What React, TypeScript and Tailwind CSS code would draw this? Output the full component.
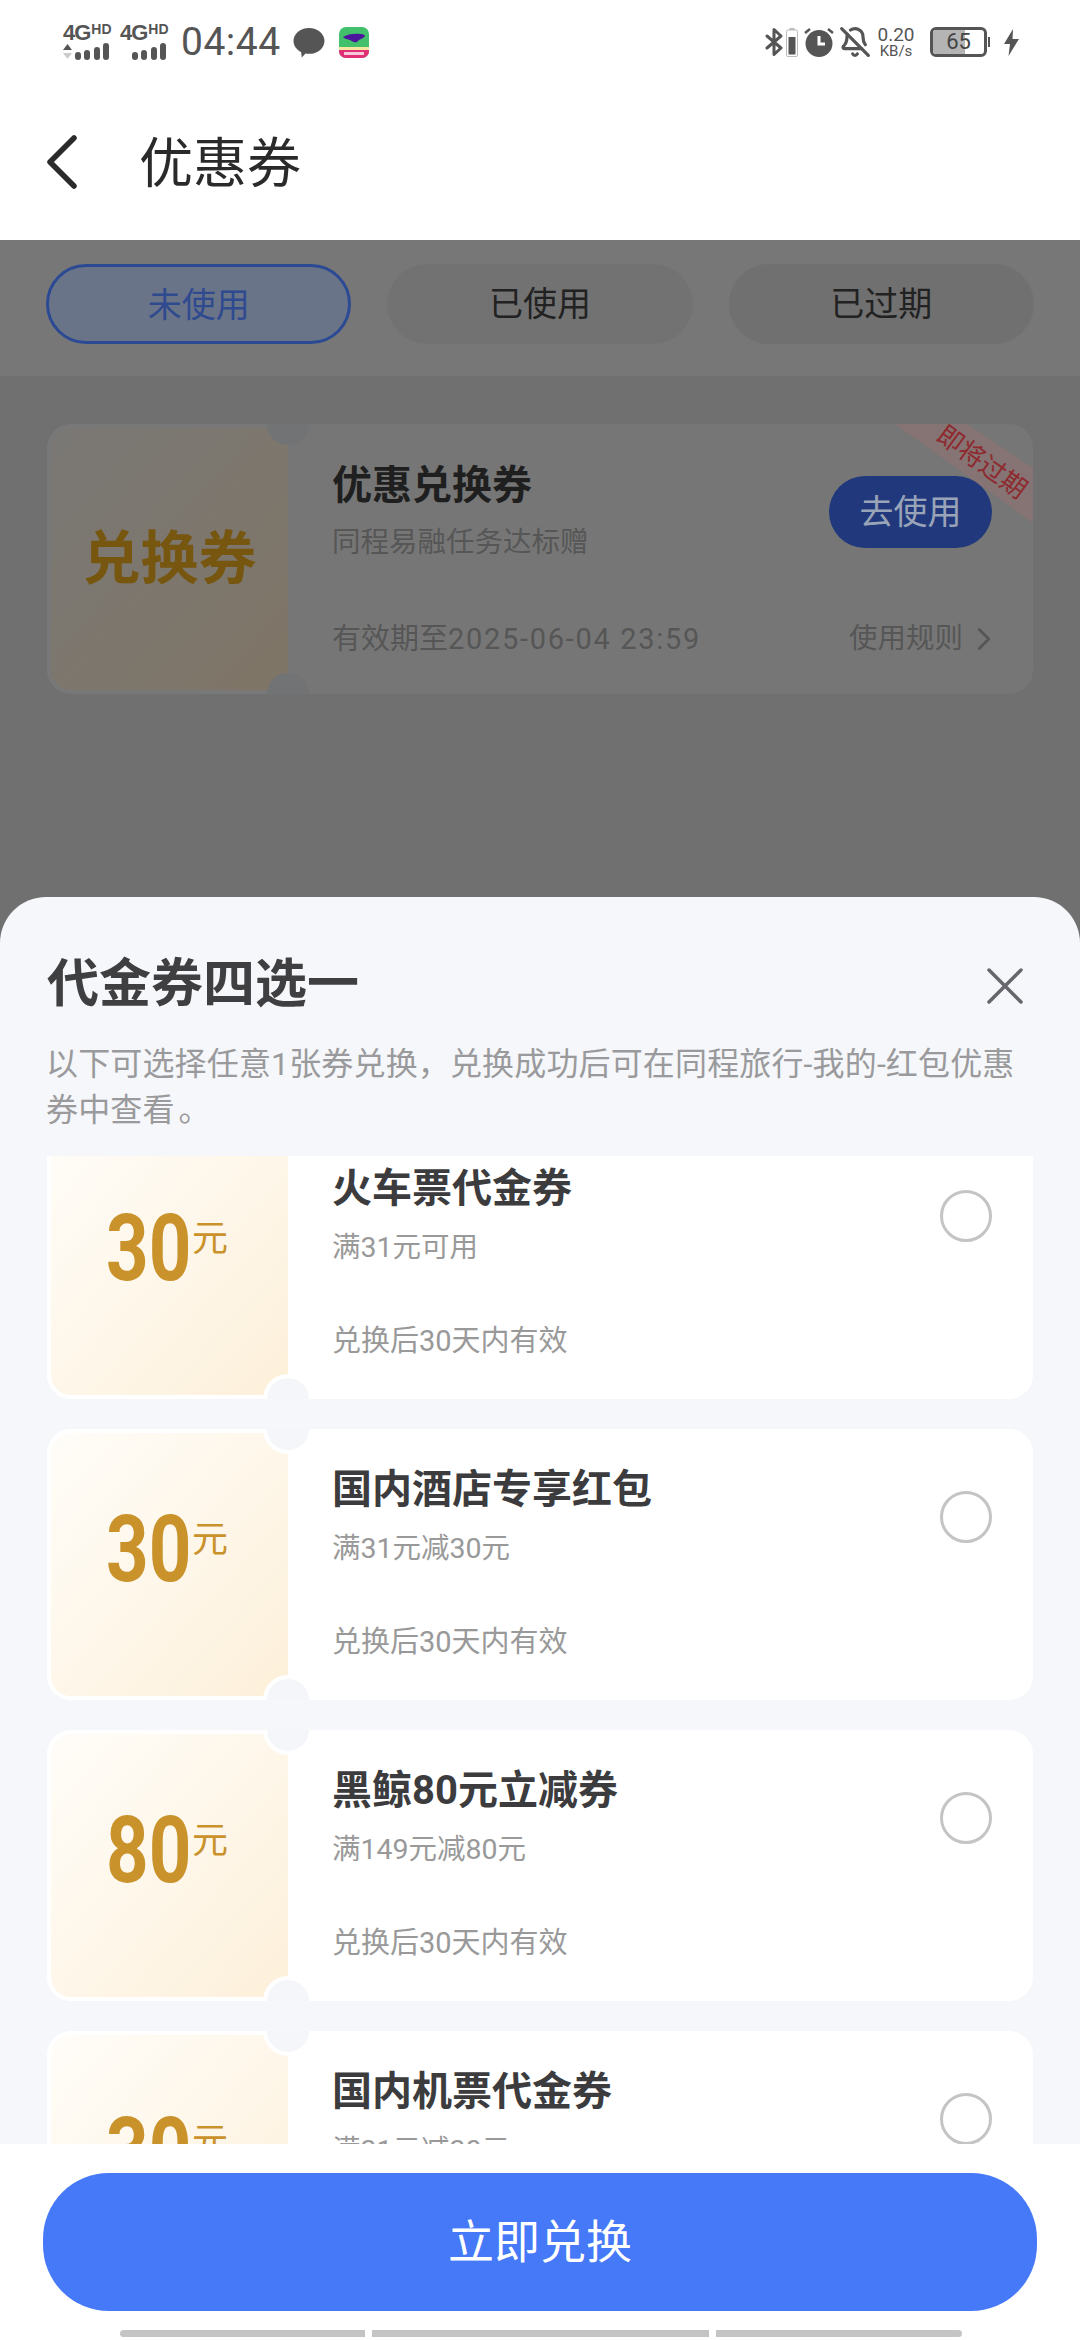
import React from 'react';
import { BellOff, ChevronRight } from 'lucide-react';

const vouchers = [
  { amount: '30', title: '火车票代金券', rule: '满31元可用' },
  { amount: '30', title: '国内酒店专享红包', rule: '满31元减30元' },
  { amount: '80', title: '黑鲸80元立减券', rule: '满149元减80元' },
  { amount: '30', title: '国内机票代金券', rule: '满31元减30元' },
];

function Signal({ arrow }: { arrow?: boolean }) {
  return (
    <div className="flex flex-col w-[47px] gap-[1px]">
      <div className="flex items-start h-[19px] leading-none font-['Liberation_Sans',sans-serif] font-bold text-[#555]">
        <span className="text-[22px] leading-[19px] tracking-[-1px]">4G</span>
        <span className="ml-[1px] text-[14px] leading-[12px]">HD</span>
      </div>
      <svg width="47" height="18" viewBox="0 0 47 18" fill="#555">
        {arrow && <path d="M0 7l4.500-6L9 7z" />}
        {arrow && <path d="M0 10l4.500 6L9 10z" fill="#ccc" />}
        <rect x="12" y="9" width="6" height="8" rx="3" />
        <rect x="21" y="7" width="6" height="10" rx="3" />
        <rect x="31" y="4" width="6" height="13" rx="3" />
        <rect x="40" y="0" width="6" height="17" rx="3" />
      </svg>
    </div>
  );
}

function StatusBar() {
  return (
    <div className="flex items-center justify-between h-[84px] pl-[63px] pr-[61px] text-[#555]">
      <div className="flex items-center">
        <Signal arrow />
        <div className="ml-[10px]"><Signal /></div>
        <span className="ml-[14px] text-[39px] leading-none tracking-[0.5px]">04:44</span>
        <svg className="ml-[12px]" width="32" height="31" viewBox="0 0 30 30" fill="#555">
          <path d="M15 1c8.300 0 15 5.600 15 12.500S23.300 26 15 26c-1.200 0-2.300-.1-3.400-.3L8 29.500l-.6-5.200C3 22 0 18 0 13.500 0 6.600 6.700 1 15 1z" />
        </svg>
        <svg className="ml-[14px]" width="30" height="31" viewBox="0 0 30 31">
          <rect width="30" height="31" rx="7" fill="#43c06c" />
          <path d="M0 20h30v4H0z" fill="#f5e7a0" />
          <path d="M0 23h30v1a7 7 0 0 1-7 7H7a7 7 0 0 1-7-7z" fill="#e22f75" />
          <path d="M4 10c4-3 12-4 18-3 2 0 4 1 4 2-2 3-6 3-8 6-3 1-5-1-7-2-2-1-5-1-7-3z" fill="#4b169c" />
          <rect x="5" y="25" width="20" height="3" fill="#f8c9d9" />
        </svg>
      </div>
      <div className="flex items-center">
        <svg width="18" height="28" viewBox="0 0 18 28" fill="none" stroke="#555" strokeWidth="3" strokeLinecap="round" strokeLinejoin="round">
          <path d="M2 8l14 12-7 6.500V1.500L16 8 2 20" />
        </svg>
        <svg className="ml-[3px]" width="12" height="29" viewBox="0 0 12 29">
          <rect x="3.500" y="0" width="5" height="2" fill="#bbb" />
          <rect x="0.500" y="2" width="11" height="26.500" rx="1.500" fill="none" stroke="#bbb" />
          <rect x="2.500" y="9" width="7" height="17.500" fill="#555" />
        </svg>
        <svg className="ml-[6px]" width="30" height="30" viewBox="0 0 30 30">
          <circle cx="15" cy="16.500" r="13.500" fill="#555" />
          <path d="M15 9v8h6" fill="none" stroke="#fff" strokeWidth="3" />
          <path d="M1 6l5-4M29 6l-5-4" stroke="#555" strokeWidth="2.500" />
        </svg>
        <BellOff size={32} strokeWidth={2.400} className="ml-[5px]" />
        <div className="ml-[6px] flex flex-col items-center w-[38px] leading-none">
          <span className="text-[19px] leading-[18px]">0.20</span>
          <span className="text-[15px] leading-[15px]">KB/s</span>
        </div>
        <div className="ml-[15px] flex items-center">
          <div className="relative w-[57px] h-[30px] rounded-[6px] border-[3px] border-[#555] overflow-hidden">
            <div className="h-full w-[32px] bg-[#b4b4b4]" />
            <span className="absolute inset-0 flex items-center justify-center text-[22px] leading-none text-[#444]">65</span>
          </div>
          <div className="ml-[1px] w-[2px] h-[10px] bg-[#555]" />
        </div>
        <svg className="ml-[14px]" width="15" height="27" viewBox="0 0 15 27" fill="#555">
          <path d="M9 0L0 15h6l-1.500 12L15 10H8.500z" />
        </svg>
      </div>
    </div>
  );
}

function ExpiringCard() {
  return (
    <div className="relative mx-[47px] mt-[48px] h-[270px] flex rounded-[24px] bg-[#767676] overflow-hidden">
      <div className="w-[241px] border-[4px] border-r-0 border-[#787878] rounded-l-[24px] bg-gradient-to-br from-[#7a7875] to-[#7f7566] flex items-center justify-center">
        <span className="text-[58px] font-bold leading-none text-[#77560f]">兑换券</span>
      </div>
      <div className="absolute left-[220px] top-[-21px] w-[42px] h-[42px] rounded-full bg-[#717375]" />
      <div className="absolute left-[220px] bottom-[-21px] w-[42px] h-[42px] rounded-full bg-[#717375]" />
      <div className="flex-1 pl-[44px] pt-[38px] pr-[41px]">
        <div className="text-[40px] leading-[48px] font-bold text-[#1f1f1f]">优惠兑换券</div>
        <div className="mt-[15px] text-[28.500px] leading-[36px] text-[#565656]">同程易融任务达标赠</div>
        <div className="mt-[59px] flex items-center justify-between text-[#565656]">
          <span className="text-[29px] leading-[36px]">有效期至<span className="tracking-[1.700px]">2025-06-04 23:59</span></span>
          <span className="flex items-center text-[28.500px] leading-[36px]">
            使用规则
            <ChevronRight size={38} strokeWidth={1.800} className="ml-[2px] -mr-[11px]" />
          </span>
        </div>
      </div>
      <div className="absolute top-0 right-0 w-[138px] h-[99px] bg-[#857473] [clip-path:polygon(0_0,72px_0,100%_44px,100%_100%)]" />
      <span className="absolute top-[23px] right-[-1px] w-[104px] h-[30px] rotate-[36deg] text-center text-[26px] leading-[30px] text-[#8e2a2f]">即将过期</span>
      <div className="absolute top-[52px] right-[41px] w-[163px] h-[72px] rounded-full bg-[#21397c] flex items-center justify-center text-[34px] text-[#9aa4b8]">去使用</div>
    </div>
  );
}

function VoucherCard({ amount, title, rule }: { amount: string; title: string; rule: string }) {
  return (
    <div className="relative h-[271px] flex rounded-[24px] bg-white overflow-hidden">
      <div className="w-[241px] border-[4px] border-r-0 border-white rounded-l-[24px] bg-gradient-to-br from-[#fffdf9] to-[#fdf0da] flex items-start pl-[55px] pt-[67px]">
        <span className="w-[86px] origin-left scale-x-[0.8] font-['Roboto',sans-serif] font-bold text-[93px] leading-[100px] text-[#c9922b]">{amount}</span>
        <span className="mt-[20px] text-[36px] leading-[40px] text-[#c9922b]">元</span>
      </div>
      <div className="absolute left-[216px] top-[-25px] w-[50px] h-[50px] rounded-full bg-[#f4f6f9] border-[4px] border-white" />
      <div className="absolute left-[216px] bottom-[-25px] w-[50px] h-[50px] rounded-full bg-[#f4f6f9] border-[4px] border-white" />
      <div className="flex-1 pl-[44px] pt-[37px]">
        <div className="text-[40px] leading-[48px] font-bold text-[#3c3c3e]">{title}</div>
        <div className="mt-[17px] text-[28.500px] leading-[36px] text-[#999]">{rule}</div>
        <div className="mt-[57px] text-[29px] leading-[36px] text-[#999]">兑换后30天内有效</div>
      </div>
      <div className="pt-[62px] pr-[41px]">
        <div className="w-[52px] h-[52px] rounded-full border-[3px] border-[#c4c4c4]" />
      </div>
    </div>
  );
}

export default function App() {
  return (
    <div className="relative w-[1080px] h-[2340px] overflow-hidden bg-[#707070] font-['Roboto','Noto_Sans_CJK_SC',sans-serif]">
      <div className="bg-white h-[240px]">
        <StatusBar />
        <div className="flex items-center h-[156px] pl-[47px]">
          <svg width="30" height="54" viewBox="0 0 30 54" fill="none" stroke="#2b2b2b" strokeWidth="5.500" strokeLinecap="round" strokeLinejoin="round">
            <path d="M27 3L3 27l24 24" />
          </svg>
          <span className="ml-[62px] pt-[6px] text-[54px] leading-none text-[#2a2a2a]">优惠券</span>
        </div>
      </div>

      <div className="bg-[#777] h-[136px] pt-[24px] px-[46px] grid grid-cols-3 gap-x-[36px] items-start">
        <div className="h-[80px] pt-[2px] rounded-full border-[3px] border-[#2c4a94] bg-[#697488] flex items-center justify-center text-[34px] text-[#2f4a8f]">未使用</div>
        <div className="h-[80px] rounded-full bg-[#727272] flex items-center justify-center text-[34px] text-[#222]">已使用</div>
        <div className="h-[80px] rounded-full bg-[#707070] flex items-center justify-center text-[34px] text-[#222]">已过期</div>
      </div>

      <ExpiringCard />

      {/* bottom sheet */}
      <div className="absolute left-0 right-0 top-[897px] bottom-0 flex flex-col rounded-t-[46px] bg-[#f5f7fa] overflow-hidden">
        <div className="flex items-start justify-between pt-[58px] pl-[47px] pr-[57px]">
          <div className="text-[52px] leading-[60px] font-bold text-[#3f3f41]">代金券四选一</div>
          <svg className="mt-[13px]" width="36" height="36" viewBox="0 0 36 36" stroke="#66666c" strokeWidth="3.500" strokeLinecap="round">
            <path d="M2 2l32 32M34 2L2 34" />
          </svg>
        </div>
        <p className="mt-[26px] px-[46px] text-[32px] leading-[46px] tracking-[0.15px] text-[#9a9a9c]">
          以下可选择任意1张券兑换，兑换成功后可在同程旅行-我的-红包优惠券中查看<span className="ml-[4px]">。</span>
        </p>
        <div className="mt-[23px] flex-1 overflow-hidden px-[47px]">
          <div className="-mt-[28px] flex flex-col gap-[30px]">
            {vouchers.map((v, idx) => (
              <VoucherCard key={idx} {...v} />
            ))}
          </div>
        </div>
        <div className="h-[196px] bg-white pt-[29px]">
          <div className="mx-[43px] h-[138px] rounded-[66px] bg-[#4679f8] flex items-center justify-center text-[46px] text-white">立即兑换</div>
          <div className="mt-[19px] pl-[120px] flex gap-[7px]">
            <div className="w-[245px] h-[7px] rounded-l-full bg-[#c4c4c4]" />
            <div className="w-[337px] h-[7px] bg-[#c4c4c4]" />
            <div className="w-[246px] h-[7px] rounded-r-full bg-[#c4c4c4]" />
          </div>
        </div>
      </div>
    </div>
  );
}
